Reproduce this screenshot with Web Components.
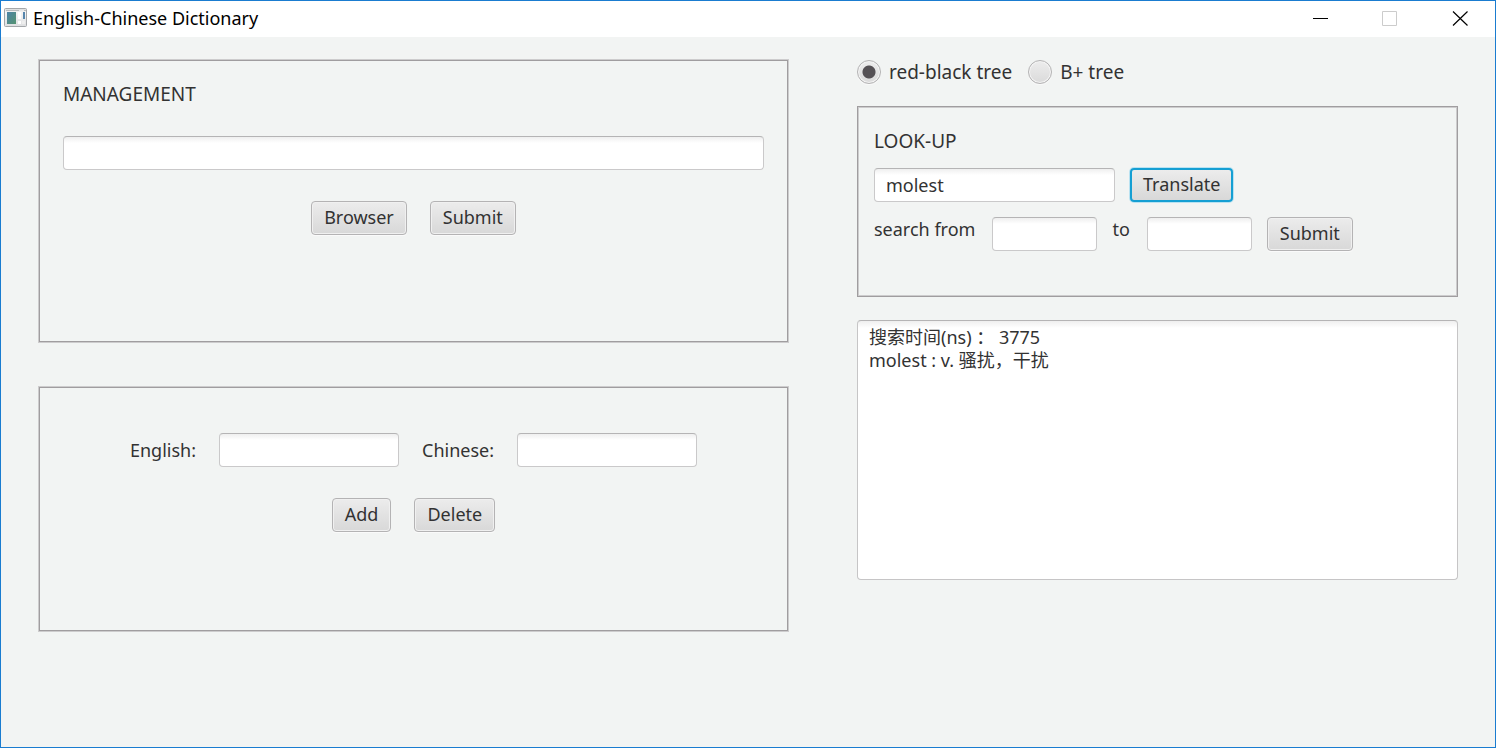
<!DOCTYPE html>
<html lang="en">
<head>
<meta charset="utf-8">
<title>English-Chinese Dictionary</title>
<style>
  body { margin: 0; font: 18px/26px "Noto Sans", "Noto Sans CJK SC", sans-serif; color: #323232; }
</style>
</head>
<body>
<app-window heading="English-Chinese Dictionary">
  <management-panel slot="left"></management-panel>
  <entry-panel slot="left"></entry-panel>
  <tree-choice slot="right"></tree-choice>
  <lookup-panel slot="right"></lookup-panel>
  <result-area slot="right"></result-area>
</app-window>

<script>
const define = (name, html) => {
  const template = document.createElement('template');
  template.innerHTML = html;
  customElements.define(name, class extends HTMLElement {
    constructor() {
      super();
      this.attachShadow({ mode: 'open' }).append(template.content.cloneNode(true));
    }
    connectedCallback() {
      const root = this.shadowRoot;
      const input = root.querySelector('input[data-field]');
      if (input) {
        input.value = this.getAttribute('value') || '';
        const label = root.querySelector('label');
        label.textContent = this.getAttribute('label') || '';
        if (!label.textContent) {
          label.remove();
          input.setAttribute('aria-label', this.getAttribute('name'));
        }
      }
      const bar = root.querySelector('title-bar');
      if (bar) bar.textContent = this.getAttribute('heading');
    }
  });
};

define('fx-button', `
  <style>
    :host { display: block; }
    button {
      display: block; box-sizing: border-box; height: 34px; padding: 0 12px 2px;
      font: inherit; line-height: 24px; color: inherit;
      border: 1px solid #b4b3b4; border-radius: 4px;
      background: linear-gradient(#ececec, #d8d8d8);
      box-shadow: inset 0 0 0 1px #f0f0f0, 0 1px 0 #fafafa;
    }
    :host([default]) button {
      border: 2px solid #159fd3; padding: 0 11px 2px;
      box-shadow: 0 0 0 1px #b9e2f1;
    }
  </style>
  <button type="button"><slot></slot></button>`);

define('fx-field', `
  <style>
    :host { display: flex; align-items: center; gap: var(--label-gap, 23px); }
    :host([top]) { align-items: flex-start; }
    :host([grow]) { width: 100%; }
    :host([grow]) input { flex: 1; }
    label { white-space: nowrap; line-height: 24px; }
    input {
      box-sizing: border-box; height: 34px; width: var(--field-width, 180px); min-width: 0; padding: 0 11px;
      font: inherit; color: inherit; outline: none;
      border: 1px solid #cac9ca; border-top-color: #b5b4b5; border-radius: 4px;
      background: linear-gradient(#efefef, #fff 6px);
    }
  </style>
  <label for="field"></label><input id="field" type="text" data-field>`);

define('fx-panel', `
  <style>
    :host {
      display: block; box-sizing: border-box; border: 1px solid #a09d9f;
      box-shadow: 0 0 0 1px #cdcccd;
    }
    :host([inner]) { box-shadow: inset 0 0 0 1px #cdcccd; }
  </style>
  <slot></slot>`);

define('title-bar', `
  <style>
    :host { display: flex; align-items: center; box-sizing: border-box; height: 36px; padding-bottom: 2px; background: #fff; color: #000; }
    .icon { width: 24px; height: 20px; margin: 0 5px 0 3px; }
    h1 { flex: 1; margin: 0; font: inherit; }
    button { width: 70px; height: 34px; padding: 0; border: 0; background: none; display: grid; place-items: center; }
  </style>
  <svg class="icon" viewBox="0 0 24 20" aria-hidden="true">
    <defs>
      <linearGradient id="screen" x2="1" y2="1"><stop stop-color="#4d83a8"/><stop offset="1" stop-color="#559470"/></linearGradient>
      <linearGradient id="case" x2="0" y2="1"><stop stop-color="#d7d9da"/><stop offset=".2" stop-color="#f5f5f5"/><stop offset="1" stop-color="#dedfe1"/></linearGradient>
    </defs>
    <rect x=".5" y=".5" width="22" height="18" rx="1" fill="url(#case)" stroke="#a4a7aa"/>
    <path d="M2 2.500h13M20 2.500h2" stroke="#b9bcbe"/>
    <rect x="3" y="4" width="9" height="12" fill="url(#screen)"/>
    <rect x="14" y="4" width="3" height="7" fill="#fff"/>
    <rect x="14" y="13" width="3" height="3" fill="#fff"/>
    <rect x="18" y="13" width="3" height="3" fill="#eee"/>
    <rect x="19" y="4" width="2" height="7" fill="#5686ad"/>
  </svg>
  <h1><slot></slot></h1>
  <button type="button" aria-label="Minimize"><svg width="16" height="16"><path d="M1 8.500h15" stroke="#000"/></svg></button>
  <button type="button" aria-label="Maximize" disabled><svg width="16" height="16"><path d="M.5 1.500h14v14H.5z" fill="none" stroke="#ccc"/></svg></button>
  <button type="button" aria-label="Close"><svg width="16" height="16"><path d="M1 1.500l14.500 14M15.500 1.500L1 15.500" stroke="#000" stroke-width="1.200"/></svg></button>`);

define('management-panel', `
  <style>
    :host { display: block; }
    .body { padding: 20px 23px 106px; }
    h2 { margin: 0 0 29px; font: inherit; font-size: 19px; }
    .actions { display: flex; justify-content: center; gap: 23px; margin-top: 31px; }
  </style>
  <fx-panel>
    <div class="body">
      <h2>MANAGEMENT</h2>
      <fx-field grow name="Dictionary file"></fx-field>
      <div class="actions"><fx-button>Browser</fx-button><fx-button>Submit</fx-button></div>
    </div>
  </fx-panel>`);

define('entry-panel', `
  <style>
    :host { display: block; }
    .body { padding: 45px 23px 98px; }
    .row { display: flex; justify-content: center; gap: 23px; }
    .actions { margin-top: 31px; }
  </style>
  <fx-panel>
    <div class="body">
      <div class="row"><fx-field label="English:"></fx-field><fx-field label="Chinese:"></fx-field></div>
      <div class="row actions"><fx-button>Add</fx-button><fx-button>Delete</fx-button></div>
    </div>
  </fx-panel>`);

define('tree-choice', `
  <style>
    :host { display: flex; gap: 16px; height: 23px; font-size: 19px; }
    label { display: flex; align-items: center; gap: 8px; }
    input {
      appearance: none; box-sizing: border-box; width: 24px; height: 24px; margin: 0;
      border: 1px solid #b4b3b4; border-radius: 50%;
      background: linear-gradient(#ededed, #dadada);
      box-shadow: inset 0 0 0 1px #f4f4f4, 0 1px 0 #fafafa;
    }
    input:checked { background: radial-gradient(circle, #555155 6px, transparent 7px), linear-gradient(#ededed, #dadada); }
  </style>
  <label><input type="radio" name="tree" checked>red-black tree</label>
  <label><input type="radio" name="tree">B+ tree</label>`);

define('lookup-panel', `
  <style>
    :host { display: block; }
    .body { padding: 21px 16px 45px; }
    h2 { margin: 0 0 14px; font: inherit; font-size: 19px; }
    .row { display: flex; gap: 15px; }
    .word { --field-width: 241px; }
    .range { --field-width: 105px; --label-gap: 17px; margin-top: 15px; }
  </style>
  <fx-panel inner>
    <div class="body">
      <h2>LOOK-UP</h2>
      <div class="row word"><fx-field name="Word" value="molest"></fx-field><fx-button default>Translate</fx-button></div>
      <div class="row range"><fx-field top label="search from"></fx-field><fx-field top label="to"></fx-field><fx-button>Submit</fx-button></div>
    </div>
  </fx-panel>`);

define('result-area', `
  <style>
    :host { display: block; }
    textarea {
      display: block; box-sizing: border-box; width: 100%; height: 260px; padding: 5px 11px; margin: 0;
      font: inherit; line-height: 23px; color: inherit; resize: none; outline: none;
      border: 1px solid #c6c5c6; border-top-color: #b5b4b5; border-radius: 4px;
      background: linear-gradient(#efefef, #fff 7px);
    }
  </style>
  <textarea readonly aria-label="Result">搜索时间(ns) ： 3775
molest : v. 骚扰，干扰</textarea>`);

define('app-window', `
  <style>
    :host {
      display: flex; flex-direction: column; box-sizing: border-box; min-height: 100vh;
      border: 1px solid #1a7cd0; background: #f2f4f3;
    }
    main {
      display: grid; grid-template-columns: 749fr 601fr; column-gap: 69px;
      align-items: start; padding: 23px 37px 24px 38px;
    }
    .left { display: grid; gap: 45px; }
    .right { display: grid; gap: 23px; }
  </style>
  <title-bar></title-bar>
  <main>
    <div class="left"><slot name="left"></slot></div>
    <div class="right"><slot name="right"></slot></div>
  </main>`);
</script>
</body>
</html>
